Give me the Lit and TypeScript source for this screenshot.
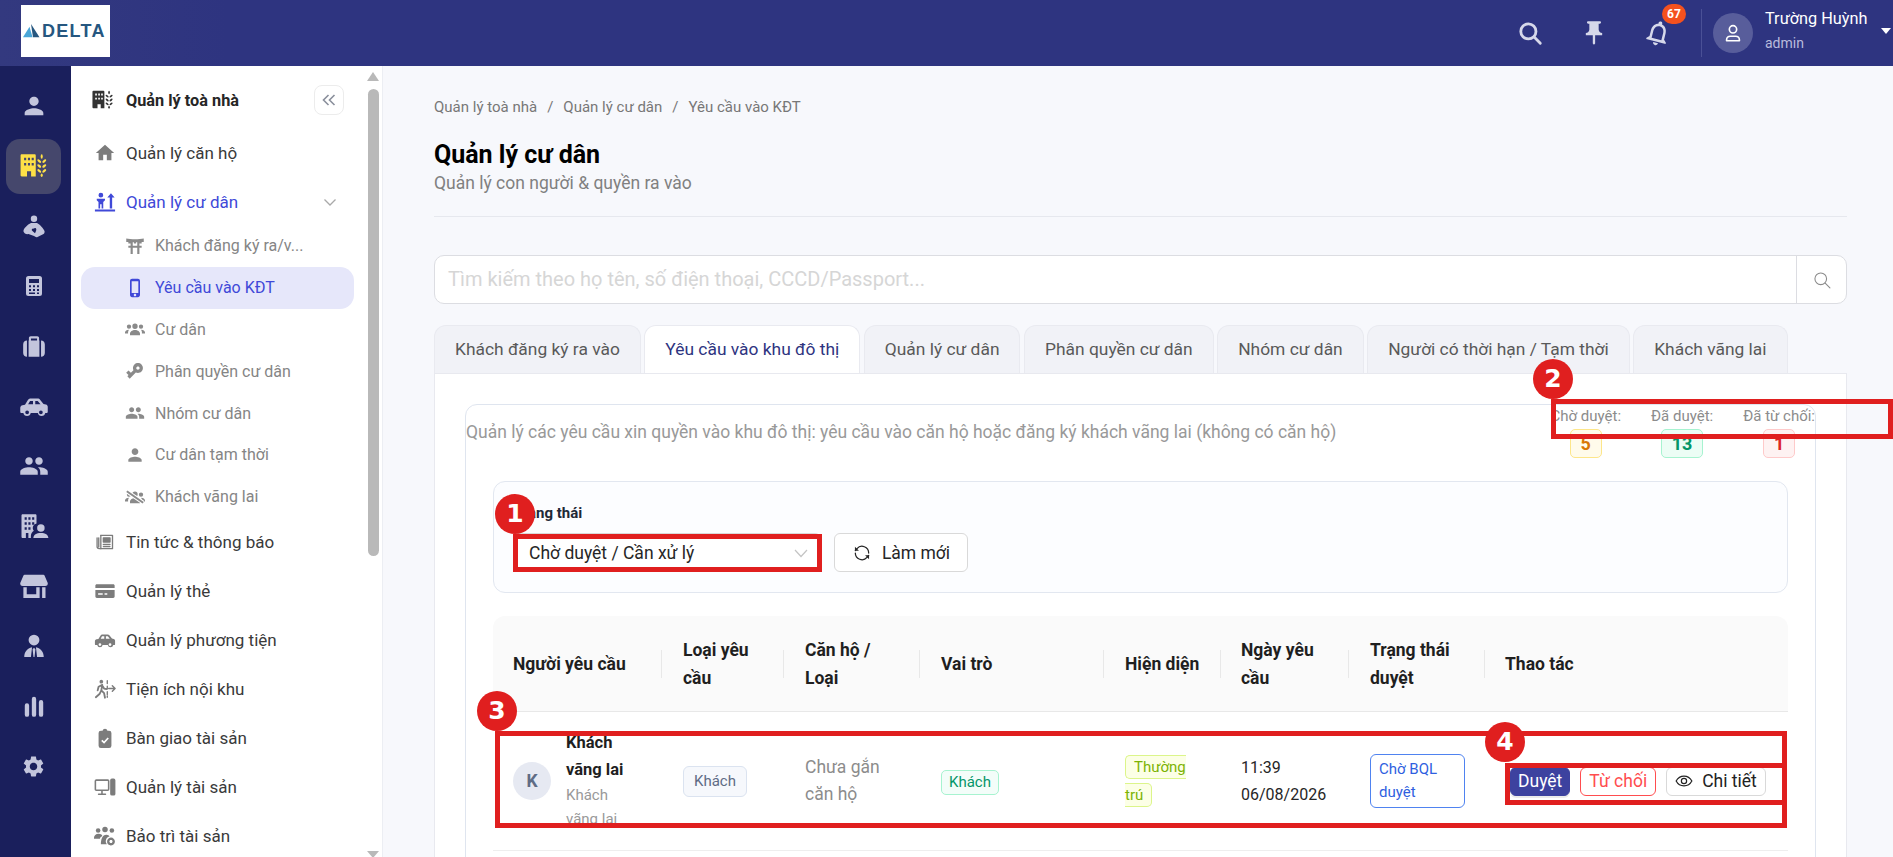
import { html, svg, css, LitElement } from 'lit';
import { customElement } from 'lit/decorators.js';

const FILLED: Record<string, string> = {
  person: 'M12 12c2.21 0 4-1.79 4-4s-1.79-4-4-4-4 1.79-4 4 1.79 4 4 4zm0 2c-2.67 0-8 1.34-8 4v2h16v-2c0-2.66-5.33-4-8-4z',
  home: 'M10 20v-6h4v6h5v-8h3L12 3 2 12h3v8z',
  group: 'M16 11c1.66 0 2.99-1.34 2.99-3S17.66 5 16 5c-1.66 0-3 1.34-3 3s1.34 3 3 3zm-8 0c1.66 0 2.99-1.34 2.99-3S9.66 5 8 5C6.34 5 5 6.34 5 8s1.34 3 3 3zm0 2c-2.33 0-7 1.17-7 3.5V19h14v-2.5c0-2.33-4.67-3.5-7-3.5zm8 0c-.29 0-.62.02-.97.05 1.16.84 1.97 1.97 1.97 3.45V19h6v-2.5c0-2.33-4.67-3.5-7-3.5z',
  phone: 'M15.5 1h-7C7.12 1 6 2.12 6 3.5v17C6 21.88 7.12 23 8.5 23h7c1.38 0 2.5-1.12 2.5-2.5v-17C18 2.12 16.88 1 15.5 1zM12 22c-.83 0-1.5-.67-1.5-1.5S11.17 19 12 19s1.5.67 1.5 1.5S12.83 22 12 22zm4-4H8V4h8v14z',
  key: 'M12.65 10C11.83 7.67 9.61 6 7 6c-3.31 0-6 2.69-6 6s2.69 6 6 6c2.61 0 4.83-1.67 5.65-4H17v4h4v-4h2v-4H12.65zM7 14c-1.1 0-2-.9-2-2s.9-2 2-2 2 .9 2 2-.9 2-2 2z',
  gear: 'M19.14 12.94c.04-.3.06-.61.06-.94 0-.32-.02-.64-.07-.94l2.03-1.58c.18-.14.23-.41.12-.61l-1.92-3.32c-.12-.22-.37-.29-.59-.22l-2.39.96c-.5-.38-1.03-.7-1.62-.94l-.36-2.54c-.04-.24-.24-.41-.48-.41h-3.84c-.24 0-.43.17-.47.41l-.36 2.54c-.59.24-1.13.57-1.62.94l-2.39-.96c-.22-.08-.47 0-.59.22L2.74 8.87c-.12.21-.08.47.12.61l2.03 1.58c-.05.3-.09.63-.09.94s.02.64.07.94l-2.03 1.58c-.18.14-.23.41-.12.61l1.92 3.32c.12.22.37.29.59.22l2.39-.96c.5.38 1.03.7 1.62.94l.36 2.54c.05.24.24.41.48.41h3.84c.24 0 .44-.17.47-.41l.36-2.54c.59-.24 1.13-.56 1.62-.94l2.39.96c.22.08.47 0 .59-.22l1.92-3.32c.12-.22.07-.47-.12-.61l-2.01-1.58zM12 15.6c-1.98 0-3.6-1.62-3.6-3.6s1.62-3.6 3.6-3.6 3.6 1.62 3.6 3.6-1.62 3.6-3.6 3.6z',
  car: 'M1 16.5v-3c0-1.1.7-2 1.8-2.2l2-.4 2.2-3.6C7.5 6.5 8.4 6 9.4 6h5.4c.9 0 1.7.4 2.2 1.1l2.6 3.3 1.9.4c1 .2 1.5 1 1.5 2v3.7c0 .6-.4 1-1 1h-1a3 3 0 0 1-5.9 0H9.4a3 3 0 0 1-5.9 0H2c-.6 0-1-.4-1-1zM7.3 10.6h3.9V7.9H9.3c-.3 0-.5.1-.7.4zm5.7 0h4.200l-1.900-2.300c-.2-.3-.5-.4-.8-.4H13zM6.500 15.500a1.500 1.500 0 1 0 0 3 1.500 1.500 0 0 0 0-3zm11 0a1.500 1.500 0 1 0 0 3 1.500 1.500 0 0 0 0-3z',
  calc: 'M6.500 2h11A2.500 2.500 0 0 1 20 4.500v15a2.500 2.500 0 0 1-2.500 2.500h-11A2.500 2.500 0 0 1 4 19.500v-15A2.500 2.500 0 0 1 6.500 2zM7 5v4h10V5zm0 6.300v2h2v-2zm4 0v2h2v-2zm4 0v2h2v-2zM7 15v2h2v-2zm4 0v2h2v-2zm4 0v2h2v-2zM7 18.500V20h6v-1.500zm8 0V20h2v-1.500z',
  luggage: 'M9 3h6c1 0 1.700.7 1.700 1.700V7H17v15H7V7h.3V4.700C7.300 3.700 8 3 9 3zm.2 2v2h5.600V5zM5.500 7v15C3.500 22 2 20.500 2 18.500v-8C2 8.500 3.500 7 5.500 7zm13 0c2 0 3.500 1.500 3.500 3.500v8c0 2-1.500 3.500-3.500 3.500z',
  store: 'M4.500 3h15c.5 0 .9.3 1 .7L23 9.500c.3 1.200-.6 2.500-2 2.500H3c-1.400 0-2.300-1.300-2-2.500l2.500-5.800c.1-.4.5-.7 1-.7zM3.500 13h2.700v5.500h7.600V13h2.700v8.500H3.500zM18.500 13h2.700v8.500h-2.700z',
  bars: 'M10 5.500a2 2 0 0 1 4 0V20a2 2 0 0 1-4 0zM3.500 11.500a2 2 0 0 1 4 0V20a2 2 0 0 1-4 0zM16.500 8.500a2 2 0 0 1 4 0V20a2 2 0 0 1-4 0z',
  tie: 'M12 1.500a5 5 0 1 1 0 10 5 5 0 0 1 0-10zM10.200 13.200l-1 9H3c0-4.500 2.700-8 7.200-9zM13.800 13.200c4.500 1 7.200 4.500 7.200 9h-6.200zM12 13.500l1.300 1.500-.8 7.200h-1L10.700 15z',
  buildingUser: 'M3 2.500h10c.6 0 1 .4 1 1V10c-2 .5-3 2-3 3.500 0 1 .4 1.700.9 2.200-1.500.8-2.400 2.400-2.400 4.300v1.500H7.500v-4h-2v4H3c-.6 0-1-.4-1-1v-17c0-.6.4-1 1-1zM4.500 5v2h1.700V5zm3 0v2h1.700V5zm3 0v2h1.700V5zM4.500 9v2h1.700V9zm3 0v2h1.700V9zm3 0v2h1.700V9zM4.500 13v2h1.700v-2zm3 0v2h1.700v-2zM17.500 10.500a3 3 0 1 1 0 6 3 3 0 0 1 0-6zM11.500 21.500c0-2.500 2.500-4 6-4s6 1.500 6 4z',
  clip: 'M7.500 4H9.300a2.800 2.800 0 0 1 5.400 0h1.800A2.500 2.500 0 0 1 19 6.500v14a2.500 2.500 0 0 1-2.500 2.500h-9A2.500 2.500 0 0 1 5 20.500v-14A2.500 2.500 0 0 1 7.500 4z',
  card: 'M3 4.500h18c.8 0 1.500.7 1.500 1.500v2.700h-21V6c0-.8.7-1.500 1.500-1.500zM1.500 11h21v7c0 .8-.7 1.500-1.500 1.500H3c-.8 0-1.500-.7-1.500-1.500zM4.500 14.500V16h5v-1.500zm7 0V16h3v-1.500z',
  pin: 'M16 9V4h1c.55 0 1-.45 1-1s-.45-1-1-1H7c-.55 0-1 .45-1 1s.45 1 1 1h1v5c0 1.660-1.340 3-3 3v2h5.970v7l1 1 1-1v-7H19v-2c-1.660 0-3-1.340-3-3z',
  bell: 'M12 22c1.100 0 2-.9 2-2h-4c0 1.100.9 2 2 2zm6-6v-5c0-3.070-1.630-5.640-4.500-6.320V4c0-.83-.67-1.500-1.500-1.500s-1.500.67-1.500 1.500v.68C7.640 5.360 6 7.920 6 11v5l-2 2v1h16v-1l-2-2zm-2 1H8v-6c0-2.480 1.510-4.500 4-4.500s4 2.020 4 4.500v6z',
  torii: 'M1.500 3c5 1.200 16 1.200 21 0v4.200H20V9h-2.700v2.800H20v2.200h-2.700v7.500h-2.600V14H9.300v7.500H6.700V14H4v-2.200h2.700V9H4V7.200H1.500zM9.300 7.400V9h1.400V7.400zm4 0V9h1.400V7.400zM9.300 9v2.800h5.400V9z',
  groups: 'M12 5.500a3.200 3.200 0 1 1 0 6.400 3.200 3.200 0 0 1 0-6.400zM4.800 6.500a2.600 2.600 0 1 1 0 5.200 2.600 2.600 0 0 1 0-5.200zM19.200 6.500a2.600 2.600 0 1 1 0 5.200 2.600 2.600 0 0 1 0-5.200zM6 19.500v-2c0-2.200 2.700-4.300 6-4.300s6 2.100 6 4.300v2zM0 17.500V16c0-1.700 2-3 4.800-3.200-.7.900-1.100 2-1.100 3.200v1.500zM24 17.500V16c0-1.700-2-3-4.800-3.200.7.900 1.100 2 1.100 3.200v1.500z',
  personUp: 'M7.500 2a2.600 2.600 0 1 1 0 5.200 2.600 2.600 0 0 1 0-5.200zM3 8.500h9v1.700l-1.900 1.800V19H8.300v-4.500H6.700V19H4.900v-7L3 10.200zM1 20.300h22v2H1zM18.500 2.500l4 4.700h-2.700V19h-2.600V7.200H14.500z',
  personHeart: 'M12 1.500a3.200 3.200 0 1 1 0 6.400 3.200 3.200 0 0 1 0-6.400zM9 9h6c3 1.500 6.500 5.500 7.500 8 .5 1.500-.5 3-2 3.500L15.500 23c-1 .5-2.500 0-3.500-1L6.500 20c-2 .5-4.500-.5-5-2.500-.5-2.500 4-7 7.500-8.500zm5 5.500c-.7-.7-1.800-.5-2.200.3-.7-.4-1.700-.1-2 .7-.3.900.4 1.500 3.200 3.700 1-2.200 1.800-3.700 1-4.700z',
};

function filled(name: string, size: number) {
  return html`<svg width=${size} height=${size} viewBox="0 0 24 24" fill="currentColor" fill-rule="evenodd"><path d=${FILLED[name]}></path></svg>`;
}

const WHEAT = svg`
  <ellipse cx="18.600" cy="3.800" rx=".9" ry="1.900"></ellipse>
  <ellipse cx="16.500" cy="7.800" rx="2" ry="1" transform="rotate(40 16.500 7.800)"></ellipse>
  <ellipse cx="20.800" cy="7.800" rx="2" ry="1" transform="rotate(-40 20.800 7.800)"></ellipse>
  <ellipse cx="16.500" cy="12" rx="2" ry="1" transform="rotate(40 16.500 12)"></ellipse>
  <ellipse cx="20.800" cy="12" rx="2" ry="1" transform="rotate(-40 20.800 12)"></ellipse>
  <ellipse cx="16.500" cy="16.200" rx="2" ry="1" transform="rotate(40 16.500 16.200)"></ellipse>
  <ellipse cx="20.800" cy="16.200" rx="2" ry="1" transform="rotate(-40 20.800 16.200)"></ellipse>
  <ellipse cx="18.600" cy="20" rx=".9" ry="1.500"></ellipse>`;

function buildingWheat(size: number) {
  return html`<svg width=${size} height=${size} viewBox="0 0 24 24" fill="currentColor" fill-rule="evenodd">
    <path d="M1.500 2h11c.6 0 1 .4 1 1v18h-4v-4.500h-3.500V21h-4.500c-.6 0-1-.4-1-1V3c0-.6.4-1 1-1zM3.500 5v2h1.800V5zm3.300 0v2h1.800V5zm3.200 0v2h1.800V5zM3.500 9.500v2h1.800v-2zm3.300 0v2h1.800v-2zm3.200 0v2h1.800v-2z"></path>
    ${WHEAT}
  </svg>`;
}

function lined(content: unknown, size: number, strokeWidth = 1.800) {
  return html`<svg width=${size} height=${size} viewBox="0 0 24 24" fill="none" stroke="currentColor" stroke-width=${strokeWidth} stroke-linecap="round" stroke-linejoin="round">${content}</svg>`;
}

const I_NEWS = svg`<path d="M7 4h14v16H5a2.500 2.500 0 0 1-2.500-2.500V7"></path><path d="M7 4v16"></path><rect x="10" y="7" width="8" height="5" fill="currentColor"></rect><path d="M10 15h8M10 17.500h8"></path><path d="M4.500 7v11"></path>`;
const I_WALK = svg`<circle cx="8" cy="4" r="2" fill="currentColor" stroke="none"></circle><path d="M9 7.500l-4 2-1 4M9 7.500l-1 6 3 3 1 5M8 13.500l-2 4-4 3.500M9.500 9l1.500 2.500 2.500.5" stroke-width="2"></path><path d="M14.500 3v3M14.500 9v3M14.500 15v3M14.500 19.500v1.500M16 11.500h7M20 8.500l3 3-3 3"></path>`;
const I_COMPUTER = svg`<rect x="1.500" y="4.500" width="14.500" height="11" rx="1"></rect><path d="M5 20h7.500M8.700 16v4"></path><rect x="18.500" y="3.500" width="4" height="17" rx="1" fill="currentColor"></rect>`;
const I_GROUP_GEAR = svg`<g fill="currentColor" stroke="none"><circle cx="4.500" cy="6" r="2.500"></circle><circle cx="12" cy="5" r="3"></circle><circle cx="19.500" cy="6" r="2.500"></circle><path d="M0 14c0-2.500 2-4.500 5-4.500 2.500 0 4 1 4 2.500-1.500 1-2.500 2-2.500 3H0zM7.500 21c0-5 1.500-10.500 6-10.500 2 0 3 1 3.500 2-3 .5-4.500 3.500-4 6.500l1 2z"></path></g><circle cx="18.500" cy="18" r="3" stroke-width="2.600" stroke-dasharray="2.200 1"></circle>`;
const I_SYNC = svg`<path d="M20 12a8 8 0 0 0-14-5.300L4 9"></path><path d="M4 12a8 8 0 0 0 14 5.300L20 15"></path><path d="M3.500 4.500v4.800h4.800z" fill="currentColor" stroke="none"></path><path d="M20.500 19.500v-4.800h-4.800z" fill="currentColor" stroke="none"></path>`;
const I_SEARCH = svg`<circle cx="10.500" cy="10.500" r="7"></circle><path d="M15.800 15.800L21.500 21.500"></path>`;
const I_EYE = svg`<path d="M1.500 12C4 7.500 7.800 5.500 12 5.500s8 2 10.500 6.500c-2.500 4.500-6.300 6.500-10.500 6.500S4 16.500 1.500 12z"></path><circle cx="12" cy="12" r="3.500"></circle>`;
const I_USER_LINE = svg`<circle cx="12" cy="8" r="4"></circle><path d="M5 20.500v-1c0-2.500 2-4 4-4h6c2 0 4 1.500 4 4v1z"></path>`;

interface NavRow { label: string; icon: unknown; }

const RAIL = [
  filled('person', 28),
  buildingWheat(28),
  filled('personHeart', 24),
  filled('calc', 24),
  filled('luggage', 26),
  filled('car', 30),
  filled('group', 30),
  filled('buildingUser', 30),
  filled('store', 30),
  filled('tie', 26),
  filled('bars', 26),
  filled('gear', 25),
];

const SUBS: NavRow[] = [
  { label: 'Khách đăng ký ra/v...', icon: filled('torii', 20) },
  { label: 'Yêu cầu vào KĐT', icon: filled('phone', 20) },
  { label: 'Cư dân', icon: filled('groups', 20) },
  { label: 'Phân quyền cư dân', icon: html`<span class="key">${filled('key', 20)}</span>` },
  { label: 'Nhóm cư dân', icon: filled('group', 20) },
  { label: 'Cư dân tạm thời', icon: filled('person', 20) },
  { label: 'Khách vãng lai', icon: html`<span class="off">${filled('groups', 20)}</span>` },
];

const TOPS: NavRow[] = [
  { label: 'Tin tức & thông báo', icon: lined(I_NEWS, 20, 1.600) },
  { label: 'Quản lý thẻ', icon: filled('card', 22) },
  { label: 'Quản lý phương tiện', icon: filled('car', 24) },
  { label: 'Tiện ích nội khu', icon: lined(I_WALK, 22, 1.500) },
  { label: 'Bàn giao tài sản', icon: html`<span class="clip">${filled('clip', 22)}<svg width="22" height="22" viewBox="0 0 24 24" fill="none" stroke="#fff" stroke-width="1.800"><path d="M8.500 14.500l2.500 2.500 4.500-5"></path></svg></span>` },
  { label: 'Quản lý tài sản', icon: lined(I_COMPUTER, 22, 1.700) },
  { label: 'Bảo trì tài sản', icon: lined(I_GROUP_GEAR, 22, 1.500) },
];

const TABS = ['Khách đăng ký ra vào', 'Yêu cầu vào khu đô thị', 'Quản lý cư dân', 'Phân quyền cư dân', 'Nhóm cư dân', 'Người có thời hạn / Tạm thời', 'Khách vãng lai'];

const COLUMNS = ['Người yêu cầu', 'Loại yêu cầu', 'Căn hộ / Loại', 'Vai trò', 'Hiện diện', 'Ngày yêu cầu', 'Trạng thái duyệt', 'Thao tác'];

const STATS = [
  { label: 'Chờ duyệt:', value: '5', kind: 'wait' },
  { label: 'Đã duyệt:', value: '13', kind: 'ok' },
  { label: 'Đã từ chối:', value: '1', kind: 'no' },
];

// red markers drawn on top of the screenshot
const MARK_BOXES = [
  { x: 513, y: 534, w: 309, h: 38 },
  { x: 1551, y: 399, w: 342, h: 40 },
  { x: 495, y: 731, w: 1292, h: 97 },
  { x: 1505, y: 763, w: 282, h: 42 },
];
const MARK_DOTS = [
  { n: 1, x: 515, y: 514 },
  { n: 2, x: 1553, y: 379 },
  { n: 3, x: 497, y: 711 },
  { n: 4, x: 1505, y: 742 },
];

@customElement('app-root')
export class AppRoot extends LitElement {
  static styles = css`
    :host {
      display: block;
      position: relative;
      width: 1893px;
      height: 857px;
      overflow: hidden;
      font-family: Roboto, 'Liberation Sans', sans-serif;
      color: #262626;
      background: #f7f8fc;
    }

    svg { display: block; }

    .topbar {
      height: 66px;
      display: flex;
      align-items: center;
      padding-left: 21px;
      background: linear-gradient(90deg, #33397f 0, #2e3480 12%);
      color: #d6d8ea;
    }

    .logo {
      width: 89px;
      height: 52px;
      box-sizing: border-box;
      margin-bottom: 4px;
      padding-left: 2px;
      background: #fff;
      display: flex;
      align-items: center;
      gap: 2px;
    }
    .logo span {
      font: 700 18px 'Liberation Sans', sans-serif;
      letter-spacing: 1.300px;
      color: #265780;
    }

    .top-tools {
      margin-left: auto;
      display: flex;
      align-items: center;
    }
    .tool { width: 64px; display: flex; justify-content: center; position: relative; }
    .bell svg { transform: rotate(14deg); }
    .badge {
      position: absolute;
      left: 36px;
      top: -14px;
      height: 20px;
      min-width: 24px;
      border-radius: 10px;
      background: #f4511e;
      color: #fff;
      font-size: 12px;
      font-weight: 700;
      line-height: 20px;
      text-align: center;
    }
    .top-sep { width: 1px; height: 48px; background: #4a5096; margin: 0 11px 0 11px; }
    .avatar {
      width: 40px;
      height: 40px;
      border-radius: 50%;
      background: #585d9b;
      color: #fff;
      display: flex;
      align-items: center;
      justify-content: center;
    }
    .who { margin: 0 1px 4px 12px; width: 101px; }
    .who-name { color: #fff; font-size: 16.300px; line-height: 20px; white-space: nowrap; }
    .who-role { color: #b9bbdc; font-size: 14px; line-height: 20px; margin-top: 4px; }
    .caret {
      width: 0;
      height: 0;
      margin: -4px 2px 0 14px;
      border-left: 5.500px solid transparent;
      border-right: 5.500px solid transparent;
      border-top: 6px solid #fff;
    }

    .layout { display: flex; height: 791px; }

    .rail {
      width: 71px;
      flex: none;
      background: #1a1f5c;
      color: #c3c5dc;
      padding: 10px 4px 0 0;
      box-sizing: border-box;
    }
    .rail-item { height: 60px; display: flex; align-items: center; justify-content: center; }
    .rail-item.on span {
      width: 55px;
      height: 55px;
      border-radius: 14px;
      background: #45476c;
      color: #fde047;
      display: flex;
      align-items: center;
      justify-content: center;
    }

    .side {
      width: 312px;
      flex: none;
      position: relative;
      background: #fff;
      border-right: 1px solid #eceef3;
      box-sizing: border-box;
      overflow: hidden;
      padding-top: 10px;
    }
    .row {
      height: 49px;
      display: flex;
      align-items: center;
      padding-left: 23px;
      font-size: 17px;
      color: #3a3a3a;
      white-space: nowrap;
    }
    .row .ico {
      width: 22px;
      display: flex;
      justify-content: center;
      margin-right: 10px;
      color: #7c7c7c;
    }
    .row.head { height: 48px; margin-bottom: 4px; font-size: 16.300px; font-weight: 700; color: #262626; }
    .row.head .ico { color: #333; margin: 0 12px 0 -2px; }
    .row.open { color: #4049d8; }
    .row.open .ico { color: #4049d8; }
    .collapse {
      width: 30px;
      height: 30px;
      box-sizing: border-box;
      margin: 0 38px 0 auto;
      border: 1px solid #ececec;
      border-radius: 8px;
      color: #8a8f9c;
      display: flex;
      align-items: center;
      justify-content: center;
    }
    .chev { margin: 0 45px 0 auto; color: #a9a9a9; }

    .subs { margin: -1px 0 0 10px; width: 273px; }
    .sub {
      height: 41.800px;
      display: flex;
      align-items: center;
      padding-left: 44px;
      font-size: 16px;
      color: #858585;
      white-space: nowrap;
      border-radius: 14px;
    }
    .sub .ico { width: 20px; margin-right: 10px; display: flex; justify-content: center; color: #8a8a8a; }
    .sub.on { background: #e6e7fa; color: #4049d8; }
    .sub.on .ico { color: #4049d8; }
    .key svg { transform: rotate(135deg); }
    .off { position: relative; display: block; }
    .off::after {
      content: '';
      position: absolute;
      left: 0;
      top: 9px;
      width: 20px;
      height: 2px;
      background: #8a8a8a;
      box-shadow: 0 1px 0 #fff, 0 -1px 0 #fff;
      transform: rotate(35deg);
    }
    .clip { position: relative; display: block; width: 22px; height: 22px; }
    .clip svg + svg { position: absolute; left: 0; top: 0; }

    /* scrollbar overlay */
    .bar { position: absolute; top: 0; bottom: 0; left: 297px; width: 11px; }
    .bar-up, .bar-down {
      position: absolute;
      left: -1px;
      width: 0;
      height: 0;
      border-left: 6.500px solid transparent;
      border-right: 6.500px solid transparent;
    }
    .bar-up { top: 6px; border-bottom: 9px solid #b9b9b9; }
    .bar-down { bottom: -1px; border-top: 7px solid #b9b9b9; }
    .bar-thumb { position: absolute; top: 23px; left: 0; width: 11px; height: 467px; border-radius: 6px; background: #b9b9b9; }

    .main {
      flex: 1;
      min-width: 0;
      padding: 31px 46px 0 51px;
      box-sizing: border-box;
      overflow: hidden;
    }

    .crumbs {
      display: flex;
      gap: 10px;
      font-size: 15px;
      line-height: 20px;
      color: #777;
    }
    .title { margin: 24px 0 0; font-size: 25px; line-height: 28px; font-weight: 700; color: #000; }
    .subtitle { margin-top: 4px; font-size: 17.500px; line-height: 20px; color: #808080; }
    .rule { height: 1px; background: #e6e8ee; margin: 23px 0 38px; }

    .search {
      height: 49px;
      display: flex;
      background: #fff;
      border: 1px solid #dcdde2;
      border-radius: 10px;
      box-sizing: border-box;
    }
    .search-text { flex: 1; padding-left: 13px; font-size: 20px; line-height: 47px; color: #d6d6d6; }
    .search-btn {
      width: 49px;
      border-left: 1px solid #dcdde2;
      display: flex;
      align-items: center;
      justify-content: center;
      color: #8b8b8b;
    }

    .tabs { display: flex; gap: 3.500px; margin-top: 21px; height: 48px; }
    .tab {
      padding: 0 20px;
      border: 1px solid #e9eaf0;
      border-bottom: 0;
      border-radius: 12px 12px 0 0;
      background: #f1f2f7;
      font-size: 17.400px;
      line-height: 47px;
      color: #595959;
      white-space: nowrap;
    }
    .tab.on { background: #fff; color: #2e3480; }

    .panel {
      height: 500px;
      background: #fff;
      border: 1px solid #e8e9ef;
      border-bottom: 0;
      padding: 30px 30px 0 30px;
      box-sizing: border-box;
    }
    .card {
      height: 480px;
      border: 1px solid #dfe5ef;
      border-radius: 12px;
      box-sizing: border-box;
    }
    .card-head { display: flex; align-items: center; justify-content: space-between; padding-top: 1px; }
    .card-note { font-size: 17.500px; color: #999; white-space: nowrap; }
    .stats { display: flex; gap: 30px; }
    .stat { display: flex; flex-direction: column; align-items: center; gap: 3px; }
    .stat-label { font-size: 15px; line-height: 20px; color: #8c8c8c; white-space: nowrap; }
    .stat-val {
      height: 29px;
      min-width: 32px;
      box-sizing: border-box;
      padding: 0 10px;
      border-radius: 5px;
      border: 1px solid;
      font-size: 18px;
      font-weight: 700;
      line-height: 27px;
      text-align: center;
    }
    .wait { color: #d97706; background: #fffbeb; border-color: #fde68a; }
    .ok { color: #059669; background: #ecfdf5; border-color: #a7f3d0; }
    .no { color: #dc2626; background: #fef2f2; border-color: #fecaca; }

    .card-body { padding: 23px 27px 0; }

    .filter {
      height: 112px;
      box-sizing: border-box;
      border: 1px solid #e2e7f0;
      border-radius: 12px;
      background: #fcfdff;
      padding: 21px 20px 0;
    }
    .filter-label { font-size: 15px; font-weight: 700; line-height: 20px; color: #1f2937; }
    .filter-row { display: flex; gap: 13px; margin-top: 10px; }
    .select {
      width: 307px;
      height: 39px;
      box-sizing: border-box;
      padding: 0 12px 0 14px;
      background: #fff;
      border: 1px solid #d9d9d9;
      border-radius: 6px;
      display: flex;
      align-items: center;
      justify-content: space-between;
      font-size: 17.500px;
      color: #262626;
    }
    .select svg { color: #c4c4c4; }
    .refresh {
      width: 134px;
      height: 39px;
      box-sizing: border-box;
      background: #fff;
      border: 1px solid #d9d9d9;
      border-radius: 6px;
      display: flex;
      align-items: center;
      justify-content: center;
      gap: 10px;
      font-size: 17.500px;
      color: #262626;
    }

    .table { margin-top: 23px; }
    .grid {
      display: grid;
      grid-template-columns: 169px 122px 136px 184px 117px 128px 136px 303px;
    }
    .thead {
      height: 96px;
      box-sizing: border-box;
      background: #fafafa;
      border-bottom: 1px solid #e8e8e8;
      border-radius: 12px 12px 0 0;
      align-items: center;
    }
    .th {
      position: relative;
      padding: 0 16px 0 21px;
      font-size: 17.500px;
      font-weight: 700;
      line-height: 28px;
      color: #1f1f1f;
    }
    .th:first-child { padding-left: 20px; padding-right: 8px; }
    .th:nth-child(6), .th:nth-child(8) { padding-left: 20px; }
    .th:not(:last-child)::after {
      content: '';
      position: absolute;
      right: 0;
      top: 50%;
      width: 1.500px;
      height: 28px;
      margin-top: -14px;
      background: #e8e8e8;
    }

    .trow { height: 139px; box-sizing: border-box; border-bottom: 1px solid #eee; align-items: center; }
    .td { padding: 0 16px 0 21px; font-size: 16px; line-height: 27px; }
    .td.date { padding-left: 20px; }

    .who-cell { display: flex; align-items: center; gap: 15px; padding-left: 20px; padding-right: 8px; }
    .face {
      width: 38px;
      height: 38px;
      flex: none;
      border-radius: 50%;
      background: #e6e9f2;
      color: #5f6c85;
      font-size: 17.500px;
      font-weight: 700;
      text-align: center;
      line-height: 38px;
    }
    .who-text { width: 72px; padding-bottom: 2px; }
    .who-name-cell { font-size: 16.500px; font-weight: 700; color: #1f1f1f; }
    .who-sub { font-size: 15px; line-height: 24px; color: #999; }

    .chip {
      display: inline-block;
      padding: 0 10px;
      height: 31px;
      box-sizing: border-box;
      border: 1px solid #dbe3f0;
      border-radius: 6px;
      background: #f6f8fc;
      font-size: 15px;
      line-height: 29px;
      color: #5f6c85;
    }
    .muted { font-size: 17.500px; color: #8c8c8c; padding-right: 30px; }
    .pill {
      display: inline-block;
      padding: 0 7px;
      height: 25px;
      box-sizing: border-box;
      border: 1px solid #a7f3d0;
      border-radius: 5px;
      background: #f3fdf9;
      font-size: 15px;
      line-height: 23px;
      color: #059669;
    }
    .presence { padding-right: 36px; line-height: 28px; }
    .lime {
      padding: 2px 8px;
      border: 1px solid #dcf58a;
      border-radius: 5px;
      background: #fcffe6;
      font-size: 15px;
      color: #7cb305;
    }
    .status {
      width: 95px;
      box-sizing: border-box;
      padding: 3px 8px;
      border: 1px solid #4f83f0;
      border-radius: 6px;
      font-size: 15px;
      line-height: 23px;
      color: #2f5fe0;
    }

    .actions { display: flex; gap: 10px; padding-left: 25px; padding-right: 0; }
    .btn {
      height: 29px;
      box-sizing: border-box;
      padding: 0 8px;
      border: 1px solid #d9d9d9;
      border-radius: 6px;
      background: #fff;
      display: flex;
      align-items: center;
      gap: 9px;
      font-size: 17.500px;
      white-space: nowrap;
      color: #222;
    }
    .btn.primary { padding: 0 7px; background: #3d429f; border-color: #3d429f; color: #fff; box-shadow: 0 2px 0 rgba(0, 0, 0, 0.08); }
    .btn.danger { border-color: #ff4d4f; color: #ff4d4f; }

    .mark-box {
      position: absolute;
      box-sizing: border-box;
      border: 5px solid #e01f1f;
      pointer-events: none;
    }
    .mark-dot {
      position: absolute;
      width: 40px;
      height: 40px;
      margin: -20px 0 0 -20px;
      border-radius: 50%;
      background: #e01f1f;
      color: #fff;
      font: 700 25px/40px 'DejaVu Sans', sans-serif;
      text-align: center;
    }
  `;

  private renderTopbar() {
    return html`
      <header class="topbar">
        <div class="logo">
          <svg width="17" height="14" viewBox="0 0 17 16" preserveAspectRatio="none"><path d="M8 0l8.500 15H10z" fill="#265780"></path><path d="M6.500 3L0 15h9.500z" fill="#4aa6d8"></path></svg>
          <span>DELTA</span>
        </div>
        <div class="top-tools">
          <div class="tool">${lined(I_SEARCH, 26, 2.600)}</div>
          <div class="tool">${filled('pin', 28)}</div>
          <div class="tool bell">${filled('bell', 30)}<span class="badge">67</span></div>
          <div class="top-sep"></div>
          <div class="avatar">${lined(I_USER_LINE, 22, 1.800)}</div>
          <div class="who">
            <div class="who-name">Trường Huỳnh</div>
            <div class="who-role">admin</div>
          </div>
          <div class="caret"></div>
        </div>
      </header>
    `;
  }

  private renderSide() {
    return html`
      <aside class="side">
        <div class="row head">
          <span class="ico">${buildingWheat(22)}</span>
          Quản lý toà nhà
          <span class="collapse">
            <svg width="14" height="14" viewBox="0 0 14 14" fill="none" stroke="currentColor" stroke-width="1.600"><path d="M6.500 2L1.500 7l5 5M12.500 2l-5 5 5 5"></path></svg>
          </span>
        </div>
        <div class="row"><span class="ico">${filled('home', 26)}</span>Quản lý căn hộ</div>
        <div class="row open">
          <span class="ico">${filled('personUp', 24)}</span>
          Quản lý cư dân
          <svg class="chev" width="14" height="14" viewBox="0 0 14 14" fill="none" stroke="currentColor" stroke-width="1.300"><path d="M1.500 4.500L7 10l5.500-5.500"></path></svg>
        </div>
        <div class="subs">
          ${SUBS.map((s, i) => html`
            <div class="sub ${i === 1 ? 'on' : ''}"><span class="ico">${s.icon}</span>${s.label}</div>
          `)}
        </div>
        ${TOPS.map(t => html`<div class="row"><span class="ico">${t.icon}</span>${t.label}</div>`)}
        <div class="bar">
          <div class="bar-up"></div>
          <div class="bar-thumb"></div>
          <div class="bar-down"></div>
        </div>
      </aside>
    `;
  }

  private renderTable() {
    return html`
      <div class="table">
        <div class="grid thead">
          ${COLUMNS.map(c => html`<div class="th">${c}</div>`)}
        </div>
        <div class="grid trow">
          <div class="td who-cell">
            <div class="face">K</div>
            <div class="who-text">
              <div class="who-name-cell">Khách vãng lai</div>
              <div class="who-sub">Khách vãng lai</div>
            </div>
          </div>
          <div class="td"><span class="chip">Khách</span></div>
          <div class="td muted">Chưa gắn căn hộ</div>
          <div class="td"><span class="pill">Khách</span></div>
          <div class="td presence"><span class="lime">Thường trú</span></div>
          <div class="td date">11:39<br />06/08/2026</div>
          <div class="td"><div class="status">Chờ BQL duyệt</div></div>
          <div class="td actions">
            <span class="btn primary">Duyệt</span>
            <span class="btn danger">Từ chối</span>
            <span class="btn">${lined(I_EYE, 18, 1.600)}Chi tiết</span>
          </div>
        </div>
      </div>
    `;
  }

  private renderMain() {
    return html`
      <main class="main">
        <nav class="crumbs">
          <span>Quản lý toà nhà</span><span>/</span><span>Quản lý cư dân</span><span>/</span><span>Yêu cầu vào KĐT</span>
        </nav>
        <h1 class="title">Quản lý cư dân</h1>
        <div class="subtitle">Quản lý con người & quyền ra vào</div>
        <div class="rule"></div>
        <div class="search">
          <div class="search-text">Tìm kiếm theo họ tên, số điện thoại, CCCD/Passport...</div>
          <div class="search-btn">${lined(I_SEARCH, 20, 1.300)}</div>
        </div>
        <div class="tabs">
          ${TABS.map((t, i) => html`<div class="tab ${i === 1 ? 'on' : ''}">${t}</div>`)}
        </div>
        <section class="panel">
          <div class="card">
            <div class="card-head">
              <div class="card-note">Quản lý các yêu cầu xin quyền vào khu đô thị: yêu cầu vào căn hộ hoặc đăng ký khách vãng lai (không có căn hộ)</div>
              <div class="stats">
                ${STATS.map(s => html`
                  <div class="stat">
                    <span class="stat-label">${s.label}</span>
                    <span class="stat-val ${s.kind}">${s.value}</span>
                  </div>
                `)}
              </div>
            </div>
            <div class="card-body">
              <div class="filter">
                <div class="filter-label">Trạng thái</div>
                <div class="filter-row">
                  <div class="select">
                    Chờ duyệt / Cần xử lý
                    <svg width="14" height="14" viewBox="0 0 14 14" fill="none" stroke="currentColor" stroke-width="1.200"><path d="M1 4l6 6.500L13 4"></path></svg>
                  </div>
                  <div class="refresh">${lined(I_SYNC, 20, 1.500)}Làm mới</div>
                </div>
              </div>
              ${this.renderTable()}
            </div>
          </div>
        </section>
      </main>
    `;
  }

  render() {
    return html`
      ${this.renderTopbar()}
      <div class="layout">
        <nav class="rail">
          ${RAIL.map((ic, i) => html`<div class="rail-item ${i === 1 ? 'on' : ''}"><span>${ic}</span></div>`)}
        </nav>
        ${this.renderSide()}
        ${this.renderMain()}
      </div>
      ${MARK_BOXES.map(b => html`<div class="mark-box" style="left:${b.x}px;top:${b.y}px;width:${b.w}px;height:${b.h}px"></div>`)}
      ${MARK_DOTS.map(d => html`<div class="mark-dot" style="left:${d.x}px;top:${d.y}px">${d.n}</div>`)}
    `;
  }
}
